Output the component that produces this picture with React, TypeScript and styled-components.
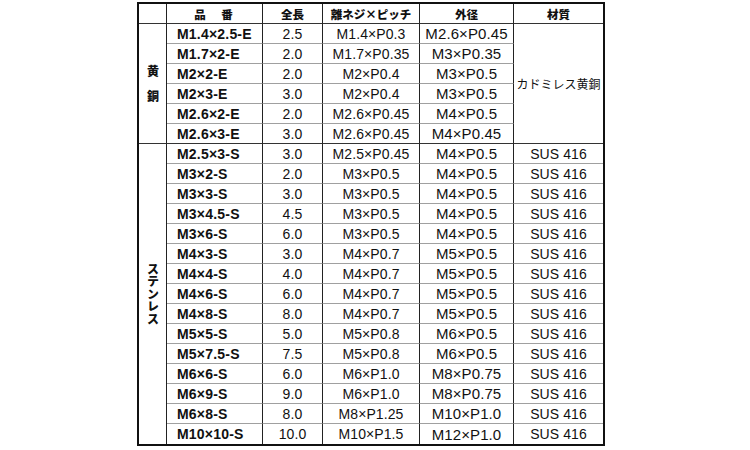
import React from "react";
import styled, { createGlobalStyle } from "styled-components";

const Global = createGlobalStyle`
  html, body { margin: 0; padding: 0; background: #fff; }
  body { font-family: "Liberation Sans", Arial, sans-serif; color: #111; }
`;

const CJK = `"Noto Sans CJK JP", "Noto Sans", sans-serif`;

const Page = styled.div`
  width: 750px;
  height: 450px;
  box-sizing: border-box;
  padding: 2px 0 0 137px;
`;

const Table = styled.div`
  display: grid;
  grid-template-columns: 28px 96px 60px 97px 94px 89px;
  grid-auto-rows: 20px;
  width: max-content;
  border: 2px solid #111;
`;

type Line = "gray" | "dark" | "none";
const lines: Record<Line, string> = {
  gray: "1px solid #a0a0a0",
  dark: "1px solid #333",
  none: "none",
};

const Cell = styled.div<{ $end?: boolean; $line: Line; $size?: number }>`
  box-sizing: border-box;
  display: flex;
  align-items: center;
  justify-content: center;
  border-right: ${(p) => (p.$end ? "none" : "1px solid #222")};
  border-bottom: ${(p) => lines[p.$line]};
  font-size: ${(p) => p.$size ?? 14}px;
  letter-spacing: 0.1px;
  white-space: nowrap;
  overflow: hidden;
`;

const HeaderCell = styled(Cell)<{ $spread?: boolean }>`
  font-family: ${CJK};
  font-weight: 900;
  font-size: 11.5px;
  letter-spacing: ${(p) => (p.$spread ? "2px" : "0")};
`;

const CodeCell = styled(Cell)`
  justify-content: flex-start;
  padding-left: 10px;
  font-weight: 700;
  letter-spacing: 0.2px;
`;

const SideCell = styled(Cell)<{ $span: number; $ls: number }>`
  grid-row: span ${(p) => p.$span};
  writing-mode: vertical-rl;
  text-orientation: upright;
  font-family: ${CJK};
  font-weight: 900;
  font-size: 12px;
  line-height: 1;
  letter-spacing: ${(p) => p.$ls}px;
`;

const MaterialCell = styled(Cell)`
  grid-row: span 6;
  font-family: ${CJK};
  font-size: 12px;
  letter-spacing: 0;
`;

type Row = [string, string, string, string];

const brass: Row[] = [
  ["M1.4×2.5-E", "2.5", "M1.4×P0.3", "M2.6×P0.45"],
  ["M1.7×2-E", "2.0", "M1.7×P0.35", "M3×P0.35"],
  ["M2×2-E", "2.0", "M2×P0.4", "M3×P0.5"],
  ["M2×3-E", "3.0", "M2×P0.4", "M3×P0.5"],
  ["M2.6×2-E", "2.0", "M2.6×P0.45", "M4×P0.5"],
  ["M2.6×3-E", "3.0", "M2.6×P0.45", "M4×P0.45"],
];

const stainless: Row[] = [
  ["M2.5×3-S", "3.0", "M2.5×P0.45", "M4×P0.5"],
  ["M3×2-S", "2.0", "M3×P0.5", "M4×P0.5"],
  ["M3×3-S", "3.0", "M3×P0.5", "M4×P0.5"],
  ["M3×4.5-S", "4.5", "M3×P0.5", "M4×P0.5"],
  ["M3×6-S", "6.0", "M3×P0.5", "M4×P0.5"],
  ["M4×3-S", "3.0", "M4×P0.7", "M5×P0.5"],
  ["M4×4-S", "4.0", "M4×P0.7", "M5×P0.5"],
  ["M4×6-S", "6.0", "M4×P0.7", "M5×P0.5"],
  ["M4×8-S", "8.0", "M4×P0.7", "M5×P0.5"],
  ["M5×5-S", "5.0", "M5×P0.8", "M6×P0.5"],
  ["M5×7.5-S", "7.5", "M5×P0.8", "M6×P0.5"],
  ["M6×6-S", "6.0", "M6×P1.0", "M8×P0.75"],
  ["M6×9-S", "9.0", "M6×P1.0", "M8×P0.75"],
  ["M6×8-S", "8.0", "M8×P1.25", "M10×P1.0"],
  ["M10×10-S", "10.0", "M10×P1.5", "M12×P1.0"],
];

export default function App() {
  return (
    <>
      <Global />
      <Page>
        <Table>
          <HeaderCell $line="dark" />
          <HeaderCell $line="dark" $spread>品　番</HeaderCell>
          <HeaderCell $line="dark">全長</HeaderCell>
          <HeaderCell $line="dark">離ネジ×ピッチ</HeaderCell>
          <HeaderCell $line="dark">外径</HeaderCell>
          <HeaderCell $line="dark" $end>材質</HeaderCell>

          {brass.map((r, i) => {
            const line: Line = i === brass.length - 1 ? "dark" : "gray";
            return (
              <React.Fragment key={r[0]}>
                {i === 0 && (
                  <SideCell $line="dark" $span={6} $ls={0.5}>
                    黄　銅
                  </SideCell>
                )}
                <CodeCell $line={line}>{r[0]}</CodeCell>
                <Cell $line={line}>{r[1]}</Cell>
                <Cell $line={line}>{r[2]}</Cell>
                <Cell $line={line} $size={15}>{r[3]}</Cell>
                {i === 0 && (
                  <MaterialCell $line="dark" $end>
                    カドミレス黄銅
                  </MaterialCell>
                )}
              </React.Fragment>
            );
          })}

          {stainless.map((r, i) => {
            const line: Line = i === stainless.length - 1 ? "none" : "gray";
            return (
              <React.Fragment key={r[0]}>
                {i === 0 && (
                  <SideCell $line="none" $span={15} $ls={0.6}>
                    ステンレス
                  </SideCell>
                )}
                <CodeCell $line={line}>{r[0]}</CodeCell>
                <Cell $line={line}>{r[1]}</Cell>
                <Cell $line={line}>{r[2]}</Cell>
                <Cell $line={line} $size={15}>{r[3]}</Cell>
                <Cell $line={line} $end>
                  SUS 416
                </Cell>
              </React.Fragment>
            );
          })}
        </Table>
      </Page>
    </>
  );
}
